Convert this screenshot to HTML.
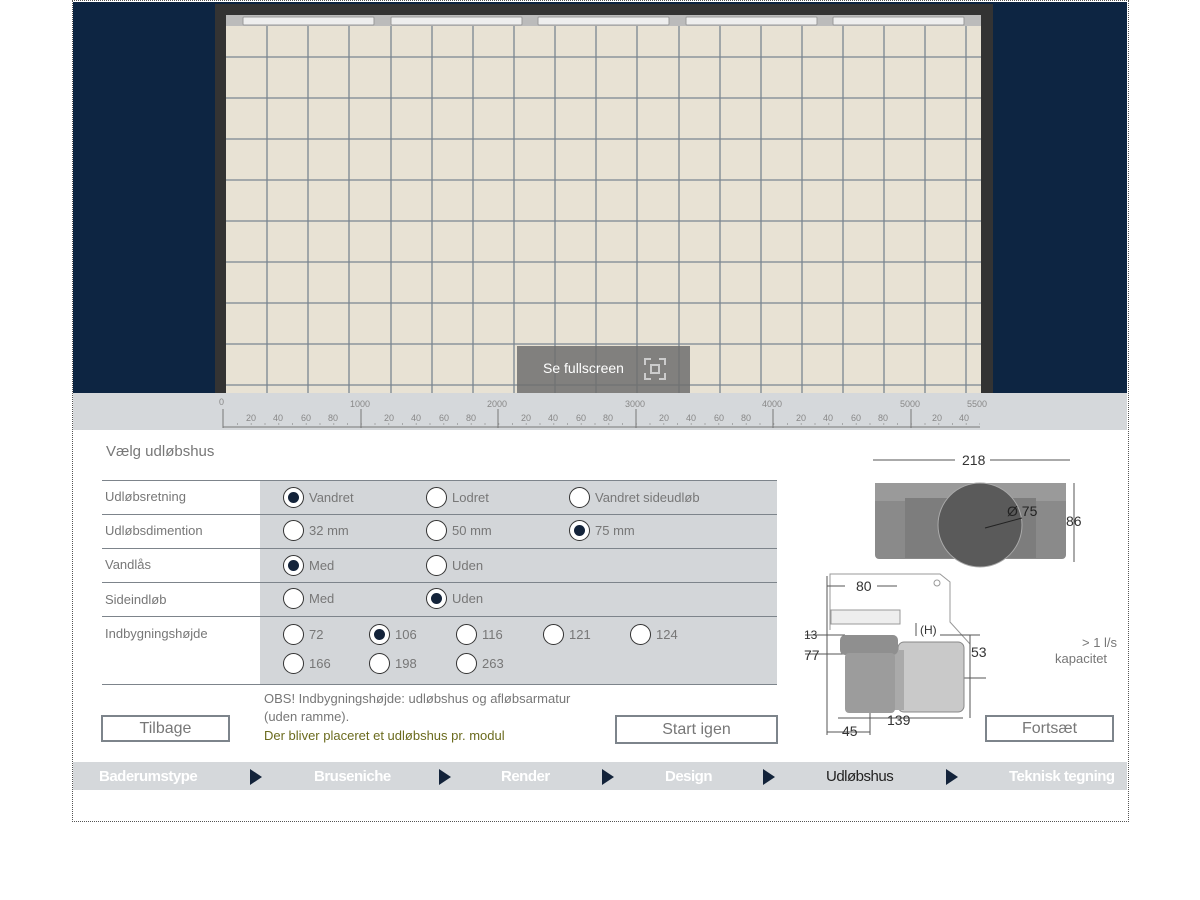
<!DOCTYPE html>
<html><head><meta charset="utf-8"><style>
*{margin:0;padding:0;box-sizing:border-box}
body{width:1200px;height:900px;background:#fff;font-family:"Liberation Sans",sans-serif;position:relative;overflow:hidden}
.abs{position:absolute}
.frame{left:72px;top:0;width:1057px;height:822px;border:1px dotted #555}
.t{position:absolute;font-size:13px;color:#777;white-space:nowrap}
.rad{position:absolute;width:21px;height:21px;border-radius:50%;background:#fff;border:1px solid #333}
.rad.on::after{content:"";position:absolute;left:4px;top:4px;width:11px;height:11px;border-radius:50%;background:#13233a}
.btn{position:absolute;border:2px solid #7d848b;background:#fff;color:#777;font-size:16px;text-align:center}
.nav{position:absolute;font-size:15px;color:#fff;font-weight:bold;letter-spacing:-0.5px}
.tri{position:absolute;width:0;height:0;border-top:8px solid transparent;border-bottom:8px solid transparent;border-left:12px solid #13233a}
</style></head><body>
<div class="abs frame"></div>
<div class="abs" style="left:73px;top:2px;width:1054px;height:391px;background:#0d2542"></div>
<div class="abs" style="left:215px;top:4px;width:778px;height:389px;background:#333"></div>
<div class="abs" style="left:226px;top:15px;width:755px;height:378px;background:#e8e2d4"></div>
<svg class="abs" style="left:226px;top:15px" width="755" height="378">
<rect x="0" y="0" width="755" height="11" fill="#bbb"/>
<g fill="#eee" stroke="#999" stroke-width="1">
<rect x="17" y="2" width="131" height="8" rx="1"/><rect x="165" y="2" width="131" height="8" rx="1"/><rect x="312" y="2" width="131" height="8" rx="1"/><rect x="460" y="2" width="131" height="8" rx="1"/><rect x="607" y="2" width="131" height="8" rx="1"/>
</g>
<g stroke="#7a8590" stroke-width="1.3">
<line x1="41" y1="11" x2="41" y2="378"/><line x1="82" y1="11" x2="82" y2="378"/><line x1="123" y1="11" x2="123" y2="378"/><line x1="165" y1="11" x2="165" y2="378"/><line x1="206" y1="11" x2="206" y2="378"/><line x1="247" y1="11" x2="247" y2="378"/><line x1="288" y1="11" x2="288" y2="378"/><line x1="329" y1="11" x2="329" y2="378"/><line x1="370" y1="11" x2="370" y2="378"/><line x1="411" y1="11" x2="411" y2="378"/><line x1="453" y1="11" x2="453" y2="378"/><line x1="494" y1="11" x2="494" y2="378"/><line x1="535" y1="11" x2="535" y2="378"/><line x1="576" y1="11" x2="576" y2="378"/><line x1="617" y1="11" x2="617" y2="378"/><line x1="658" y1="11" x2="658" y2="378"/><line x1="699" y1="11" x2="699" y2="378"/><line x1="740" y1="11" x2="740" y2="378"/>
<line x1="0" y1="42" x2="755" y2="42"/><line x1="0" y1="83" x2="755" y2="83"/><line x1="0" y1="124" x2="755" y2="124"/><line x1="0" y1="165" x2="755" y2="165"/><line x1="0" y1="206" x2="755" y2="206"/><line x1="0" y1="247" x2="755" y2="247"/><line x1="0" y1="288" x2="755" y2="288"/><line x1="0" y1="329" x2="755" y2="329"/><line x1="0" y1="370" x2="755" y2="370"/>
</g>
</svg>
<div class="abs" style="left:517px;top:346px;width:173px;height:47px;background:rgba(110,110,110,.85)"></div>
<div class="t" style="left:543px;top:360px;color:#fff;font-size:14px">Se fullscreen</div>
<svg class="abs" style="left:644px;top:358px" width="22" height="22" fill="none" stroke="#ccc" stroke-width="2"><path d="M1 7V1h6M15 1h6v6M21 15v6h-6M7 21H1v-6"/><rect x="7" y="7" width="8" height="8"/></svg>
<!-- ruler -->
<div class="abs" style="left:73px;top:393px;width:1054px;height:37px;background:#d5d8db"></div>
<svg class="abs" style="left:0;top:393px" width="1200" height="40" font-family="Liberation Sans" font-size="9" fill="#888">
<g stroke="#777" stroke-width="1">
<line x1="223" y1="34" x2="980" y2="34"/>
<line x1="223" y1="16" x2="223" y2="35"/><line x1="361" y1="16" x2="361" y2="35"/><line x1="498" y1="16" x2="498" y2="35"/><line x1="636" y1="16" x2="636" y2="35"/><line x1="773" y1="16" x2="773" y2="35"/><line x1="911" y1="16" x2="911" y2="35"/>
</g>
<g stroke="#777" stroke-dasharray="1 12.75"><line x1="237" y1="31" x2="980" y2="31"/></g>
<text x="219" y="12">0</text><text x="350" y="14">1000</text><text x="487" y="14">2000</text><text x="625" y="14">3000</text><text x="762" y="14">4000</text><text x="900" y="14">5000</text><text x="967" y="14">5500</text>
<g id="r"><text x="246" y="28">20</text><text x="273" y="28">40</text><text x="301" y="28">60</text><text x="328" y="28">80</text></g>
<use href="#r" x="138"/><use href="#r" x="275"/><use href="#r" x="413"/><use href="#r" x="550"/><text x="932" y="28">20</text><text x="959" y="28">40</text>
</svg>
<!-- form -->
<div class="t" style="left:106px;top:443px;font-size:15px">Vælg udløbshus</div>
<div class="abs" style="left:260px;top:480px;width:517px;height:204px;background:#d3d6d9"></div>
<div class="abs" style="left:102px;top:480px;width:675px;height:1px;background:#7d848b"></div>
<div class="abs" style="left:102px;top:514px;width:675px;height:1px;background:#7d848b"></div>
<div class="abs" style="left:102px;top:548px;width:675px;height:1px;background:#7d848b"></div>
<div class="abs" style="left:102px;top:582px;width:675px;height:1px;background:#7d848b"></div>
<div class="abs" style="left:102px;top:616px;width:675px;height:1px;background:#7d848b"></div>
<div class="abs" style="left:102px;top:684px;width:675px;height:1px;background:#7d848b"></div>
<div class="t" style="left:105px;top:489px">Udløbsretning</div>
<div class="t" style="left:105px;top:523px">Udløbsdimention</div>
<div class="t" style="left:105px;top:557px">Vandlås</div>
<div class="t" style="left:105px;top:592px">Sideindløb</div>
<div class="t" style="left:105px;top:626px">Indbygningshøjde</div>
<div class="rad on" style="left:283px;top:487px"></div><div class="t" style="left:309px;top:490px">Vandret</div>
<div class="rad" style="left:426px;top:487px"></div><div class="t" style="left:452px;top:490px">Lodret</div>
<div class="rad" style="left:569px;top:487px"></div><div class="t" style="left:595px;top:490px">Vandret sideudløb</div>
<div class="rad" style="left:283px;top:520px"></div><div class="t" style="left:309px;top:523px">32 mm</div>
<div class="rad" style="left:426px;top:520px"></div><div class="t" style="left:452px;top:523px">50 mm</div>
<div class="rad on" style="left:569px;top:520px"></div><div class="t" style="left:595px;top:523px">75 mm</div>
<div class="rad on" style="left:283px;top:555px"></div><div class="t" style="left:309px;top:558px">Med</div>
<div class="rad" style="left:426px;top:555px"></div><div class="t" style="left:452px;top:558px">Uden</div>
<div class="rad" style="left:283px;top:588px"></div><div class="t" style="left:309px;top:591px">Med</div>
<div class="rad on" style="left:426px;top:588px"></div><div class="t" style="left:452px;top:591px">Uden</div>
<div class="rad" style="left:283px;top:624px"></div><div class="t" style="left:309px;top:627px">72</div>
<div class="rad on" style="left:369px;top:624px"></div><div class="t" style="left:395px;top:627px">106</div>
<div class="rad" style="left:456px;top:624px"></div><div class="t" style="left:482px;top:627px">116</div>
<div class="rad" style="left:543px;top:624px"></div><div class="t" style="left:569px;top:627px">121</div>
<div class="rad" style="left:630px;top:624px"></div><div class="t" style="left:656px;top:627px">124</div>
<div class="rad" style="left:283px;top:653px"></div><div class="t" style="left:309px;top:656px">166</div>
<div class="rad" style="left:369px;top:653px"></div><div class="t" style="left:395px;top:656px">198</div>
<div class="rad" style="left:456px;top:653px"></div><div class="t" style="left:482px;top:656px">263</div>
<div class="t" style="left:264px;top:691px">OBS! Indbygningshøjde: udløbshus og afløbsarmatur</div>
<div class="t" style="left:264px;top:709px">(uden ramme).</div>
<div class="t" style="left:264px;top:728px;color:#6b6b1e">Der bliver placeret et udløbshus pr. modul</div>
<div class="btn" style="left:101px;top:715px;width:129px;height:27px;line-height:23px">Tilbage</div>
<div class="btn" style="left:615px;top:715px;width:163px;height:29px;line-height:26px">Start igen</div>
<div class="btn" style="left:985px;top:715px;width:129px;height:27px;line-height:23px">Fortsæt</div>
<!-- drawings -->
<svg class="abs" style="left:790px;top:440px" width="340" height="310" font-family="Liberation Sans" font-size="14" fill="#333">
<g stroke="#555" stroke-width="1"><line x1="83" y1="20" x2="165" y2="20"/><line x1="200" y1="20" x2="280" y2="20"/><line x1="284" y1="43" x2="284" y2="122"/></g>
<text x="172" y="25">218</text><text x="276" y="86">86</text>
<rect x="85" y="43" width="191" height="76" rx="4" fill="#8a8a8a"/>
<rect x="85" y="43" width="191" height="18" fill="#9a9a9a"/>
<rect x="115" y="58" width="131" height="60" fill="#7d7d7d"/>
<circle cx="190" cy="85" r="42" fill="#5a5a5a" stroke="#aaa"/>
<line x1="195" y1="88" x2="232" y2="78" stroke="#222"/><text x="217" y="76" fill="#222">Ø 75</text>
<g stroke="#999" fill="none"><path d="M40 190V134h110l10 8v40l20 22"/></g>
<circle cx="147" cy="143" r="3" fill="none" stroke="#999"/>
<g stroke="#555"><line x1="37" y1="146" x2="55" y2="146"/><line x1="87" y1="146" x2="107" y2="146"/><line x1="37" y1="136" x2="37" y2="295"/><line x1="15" y1="195" x2="55" y2="195"/><line x1="15" y1="214" x2="55" y2="214"/><line x1="48" y1="278" x2="173" y2="278"/><line x1="37" y1="292" x2="80" y2="292"/><line x1="80" y1="230" x2="80" y2="295"/><line x1="180" y1="195" x2="180" y2="278"/><line x1="150" y1="195" x2="190" y2="195"/><line x1="150" y1="238" x2="196" y2="238"/><line x1="126" y1="183" x2="126" y2="196"/></g>
<text x="66" y="151">80</text><text x="14" y="199" font-size="12">13</text><text x="14" y="220">77</text><text x="181" y="217">53</text><text x="97" y="285">139</text><text x="52" y="296">45</text><text x="130" y="194" font-size="12">(H)</text>
<rect x="41" y="170" width="69" height="14" fill="#eee" stroke="#999"/>
<rect x="108" y="202" width="66" height="70" rx="6" fill="#c9c9c9" stroke="#888"/>
<rect x="100" y="210" width="14" height="60" fill="#aaa"/>
<rect x="50" y="195" width="58" height="20" rx="5" fill="#8f8f8f"/>
<rect x="55" y="213" width="50" height="60" rx="4" fill="#9c9c9c"/>
<text x="292" y="207" font-size="13" fill="#777">&gt; 1 l/s</text><text x="265" y="223" font-size="13" fill="#777">kapacitet</text>
</svg>
<!-- nav -->
<div class="abs" style="left:73px;top:762px;width:1054px;height:28px;background:#d5d8db"></div>
<div class="nav" style="left:99px;top:768px">Baderumstype</div>
<div class="tri" style="left:250px;top:769px"></div>
<div class="nav" style="left:314px;top:768px">Bruseniche</div>
<div class="tri" style="left:439px;top:769px"></div>
<div class="nav" style="left:501px;top:768px">Render</div>
<div class="tri" style="left:602px;top:769px"></div>
<div class="nav" style="left:665px;top:768px">Design</div>
<div class="tri" style="left:763px;top:769px"></div>
<div class="nav" style="left:826px;top:768px;color:#222;font-weight:normal">Udløbshus</div>
<div class="tri" style="left:946px;top:769px"></div>
<div class="nav" style="left:1009px;top:768px">Teknisk tegning</div>
</body></html>
